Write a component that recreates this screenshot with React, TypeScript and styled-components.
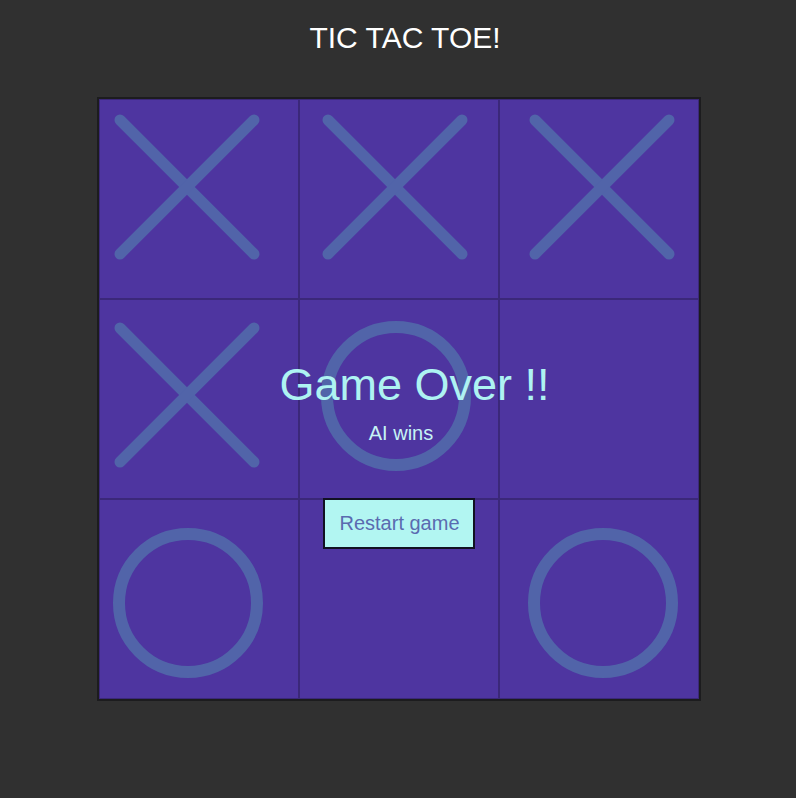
import React from "react";
import styled, { createGlobalStyle } from "styled-components";

const Global = createGlobalStyle`
  html, body { margin: 0; padding: 0; background: #303030; }
  body { font-family: "Liberation Sans", Arial, sans-serif; }
`;

const Page = styled.div`
  width: 796px;
  min-height: 798px;
  display: flex;
  flex-direction: column;
  align-items: center;
  background: #303030;
`;

const Title = styled.h1`
  margin: 21px 0 42px 14px;
  font-size: 30px;
  font-weight: 400;
  color: #ffffff;
  line-height: normal;
`;

const Board = styled.div`
  position: relative;
  display: grid;
  grid-template-columns: repeat(3, 200px);
  grid-template-rows: repeat(3, 200px);
  border: 2px solid #1c1c1e;
  margin-left: 2px;
`;

const Cell = styled.div`
  box-sizing: border-box;
  background: #4e35a0;
  border: 1px solid #3b2879;
  position: relative;
  overflow: visible;
`;

const Mark = styled.svg<{ $col: number; $row: number }>`
  position: absolute;
  width: 150px;
  height: 150px;
  left: ${(p) => 13 + Math.round(7.5 * p.$col)}px;
  top: ${(p) => 13 + Math.round(7.5 * p.$row)}px;
`;

const Overlay = styled.div`
  position: absolute;
  inset: 0;
  display: flex;
  flex-direction: column;
  align-items: center;
  padding-top: 260px;
`;

const GameOver = styled.div`
  font-size: 45px;
  color: #aef3f2;
  line-height: normal;
  margin-left: 31px;
`;

const Winner = styled.div`
  font-size: 20px;
  color: #c6f3f5;
  margin-top: 11px;
  margin-left: 4px;
  line-height: normal;
`;

const RestartButton = styled.button`
  margin-top: 53px;
  font-family: "Liberation Sans", Arial, sans-serif;
  font-size: 20px;
  color: #5a6bb0;
  background: #b2f6f2;
  border: 2px solid #111122;
  padding: 12px 13px 12px 14px;
  line-height: normal;
  cursor: pointer;
`;

const STROKE = "#5164a9";

const XMark = ({ col, row }: { col: number; row: number }) => (
  <Mark $col={col} $row={row} viewBox="0 0 150 150">
    <g stroke={STROKE} strokeWidth={11} strokeLinecap="round">
      <line x1={7} y1={7} x2={141} y2={141} />
      <line x1={141} y1={7} x2={7} y2={141} />
    </g>
  </Mark>
);

const OMark = ({ col, row }: { col: number; row: number }) => (
  <Mark $col={col} $row={row} viewBox="0 0 150 150">
    <circle cx={75} cy={75} r={69} fill="none" stroke={STROKE} strokeWidth={12} />
  </Mark>
);

const board: ("X" | "O" | "")[] = ["X", "X", "X", "X", "O", "", "O", "", "O"];

export default function App() {
  return (
    <Page>
      <Global />
      <Title>TIC TAC TOE!</Title>
      <Board>
        {board.map((v, i) => {
          const col = i % 3;
          const row = Math.floor(i / 3);
          return (
            <Cell key={i}>
              {v === "X" && <XMark col={col} row={row} />}
              {v === "O" && <OMark col={col} row={row} />}
            </Cell>
          );
        })}
        <Overlay>
          <GameOver>Game Over !!</GameOver>
          <Winner>AI wins</Winner>
          <RestartButton>Restart game</RestartButton>
        </Overlay>
      </Board>
    </Page>
  );
}
